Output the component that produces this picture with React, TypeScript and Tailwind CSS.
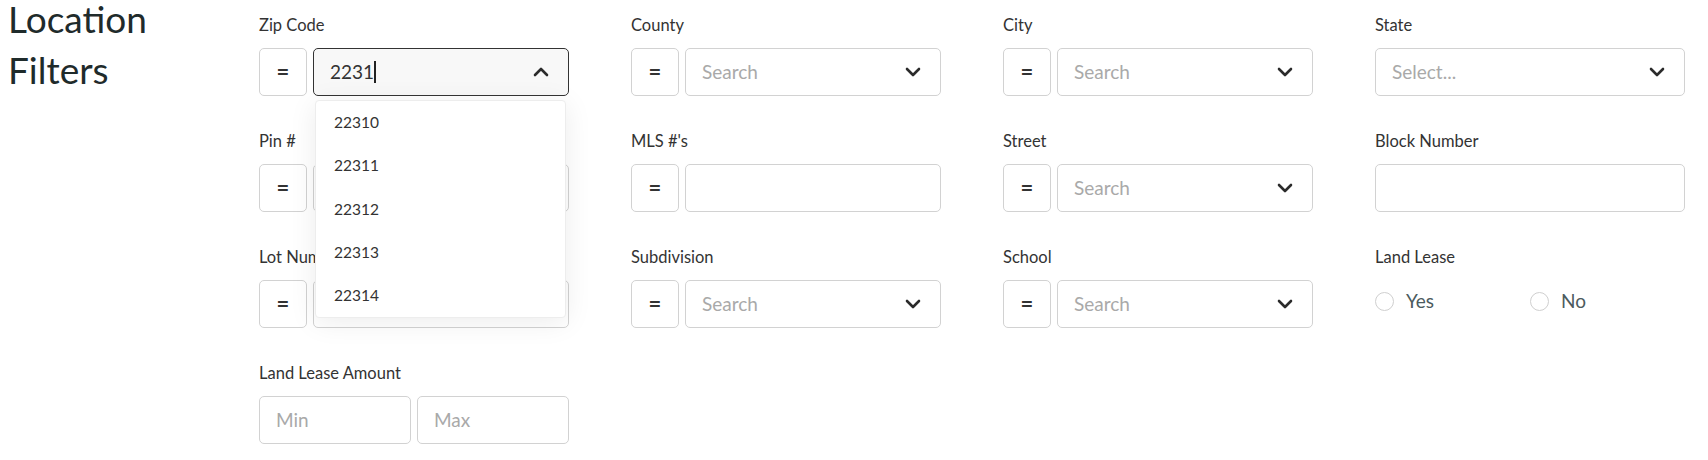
import { ChevronDown, ChevronUp } from "lucide-react"

const font = { fontFamily: "Lato, 'Noto Sans', sans-serif" }

function Label({ children }: { children: React.ReactNode }) {
  return <div className="mb-[11px] text-[16.5px] leading-6 text-[#333]">{children}</div>
}

function Eq() {
  return (
    <div className="flex h-12 w-12 shrink-0 items-center justify-center rounded-[5px] border border-[#d2d2d2] bg-white text-[22px] font-bold leading-none text-[#333]">
      =
    </div>
  )
}

function Select({ placeholder }: { placeholder: string }) {
  return (
    <div className="flex h-12 flex-1 items-center justify-between rounded-[5px] border border-[#d2d2d2] bg-white pl-4 pr-[15px]">
      <span className="text-[19px] text-[#a9a9a9]">{placeholder}</span>
      <ChevronDown size={24} strokeWidth={2.6} className="text-[#2b2b2b]" />
    </div>
  )
}

function Input({ placeholder }: { placeholder?: string }) {
  return (
    <div className="flex h-12 flex-1 items-center rounded-[5px] border border-[#d2d2d2] bg-white pl-4">
      <span className="text-[19px] text-[#a9a9a9]">{placeholder}</span>
    </div>
  )
}

function Field({ label, children }: { label: string; children: React.ReactNode }) {
  return (
    <div>
      <Label>{label}</Label>
      <div className="flex gap-[6px]">{children}</div>
    </div>
  )
}

function Radio({ label }: { label: string }) {
  return (
    <div className="flex h-6 items-center gap-[12px]">
      <span className="h-[19px] w-[19px] rounded-full border border-[#cfcfcf] bg-white" />
      <span className="text-[19px] text-[#4c5b5e]">{label}</span>
    </div>
  )
}

const zips = ["22310", "22311", "22312", "22313", "22314"]

export default function App() {
  return (
    <div className="flex min-h-screen items-start bg-white" style={font}>
      <h1 className="-mt-[7px] w-[259px] shrink-0 pl-[8px] text-[37px] leading-[51px] text-[#1f2b2b]">
        Location
        <br />
        Filters
      </h1>

      <div className="mt-[13px] grid grid-cols-[repeat(4,310px)] gap-x-[62px] gap-y-[33px]">
        <div className="relative z-10">
          <Label>Zip Code</Label>
          <div className="flex gap-[6px]">
            <Eq />
            <div className="relative flex h-12 flex-1 items-center justify-between rounded-[5px] border border-[#333] bg-[#f8f8f8] pl-4 pr-[15px]">
              <span className="text-[19px] text-[#333]">
                2231<span className="inline-block h-[22px] w-[1.5px] translate-y-[4px] bg-[#222]" />
              </span>
              <ChevronUp size={24} strokeWidth={2.6} className="text-[#2b2b2b]" />
              <div className="absolute left-[1px] top-[calc(100%+5px)] w-[251px] rounded-[4px] border border-[#ededed] bg-white shadow-[0_4px_28px_rgba(0,0,0,0.08)]">
                {zips.map((z) => (
                  <div key={z} className="flex h-[43.3px] items-center pl-[18px] text-[15.5px] text-[#333]">
                    {z}
                  </div>
                ))}
              </div>
            </div>
          </div>
        </div>

        <Field label="County">
          <Eq />
          <Select placeholder="Search" />
        </Field>
        <Field label="City">
          <Eq />
          <Select placeholder="Search" />
        </Field>
        <Field label="State">
          <Select placeholder="Select..." />
        </Field>

        <Field label="Pin #">
          <Eq />
          <Input />
        </Field>
        <Field label="MLS #'s">
          <Eq />
          <Input />
        </Field>
        <Field label="Street">
          <Eq />
          <Select placeholder="Search" />
        </Field>
        <Field label="Block Number">
          <Input />
        </Field>

        <Field label="Lot Number">
          <Eq />
          <Input />
        </Field>
        <Field label="Subdivision">
          <Eq />
          <Select placeholder="Search" />
        </Field>
        <Field label="School">
          <Eq />
          <Select placeholder="Search" />
        </Field>
        <div>
          <Label>Land Lease</Label>
          <div className="mt-[20px] grid grid-cols-2">
            <Radio label="Yes" />
            <Radio label="No" />
          </div>
        </div>

        <div>
          <Label>Land Lease Amount</Label>
          <div className="flex gap-[6px]">
            <Input placeholder="Min" />
            <Input placeholder="Max" />
          </div>
        </div>
      </div>
    </div>
  )
}
